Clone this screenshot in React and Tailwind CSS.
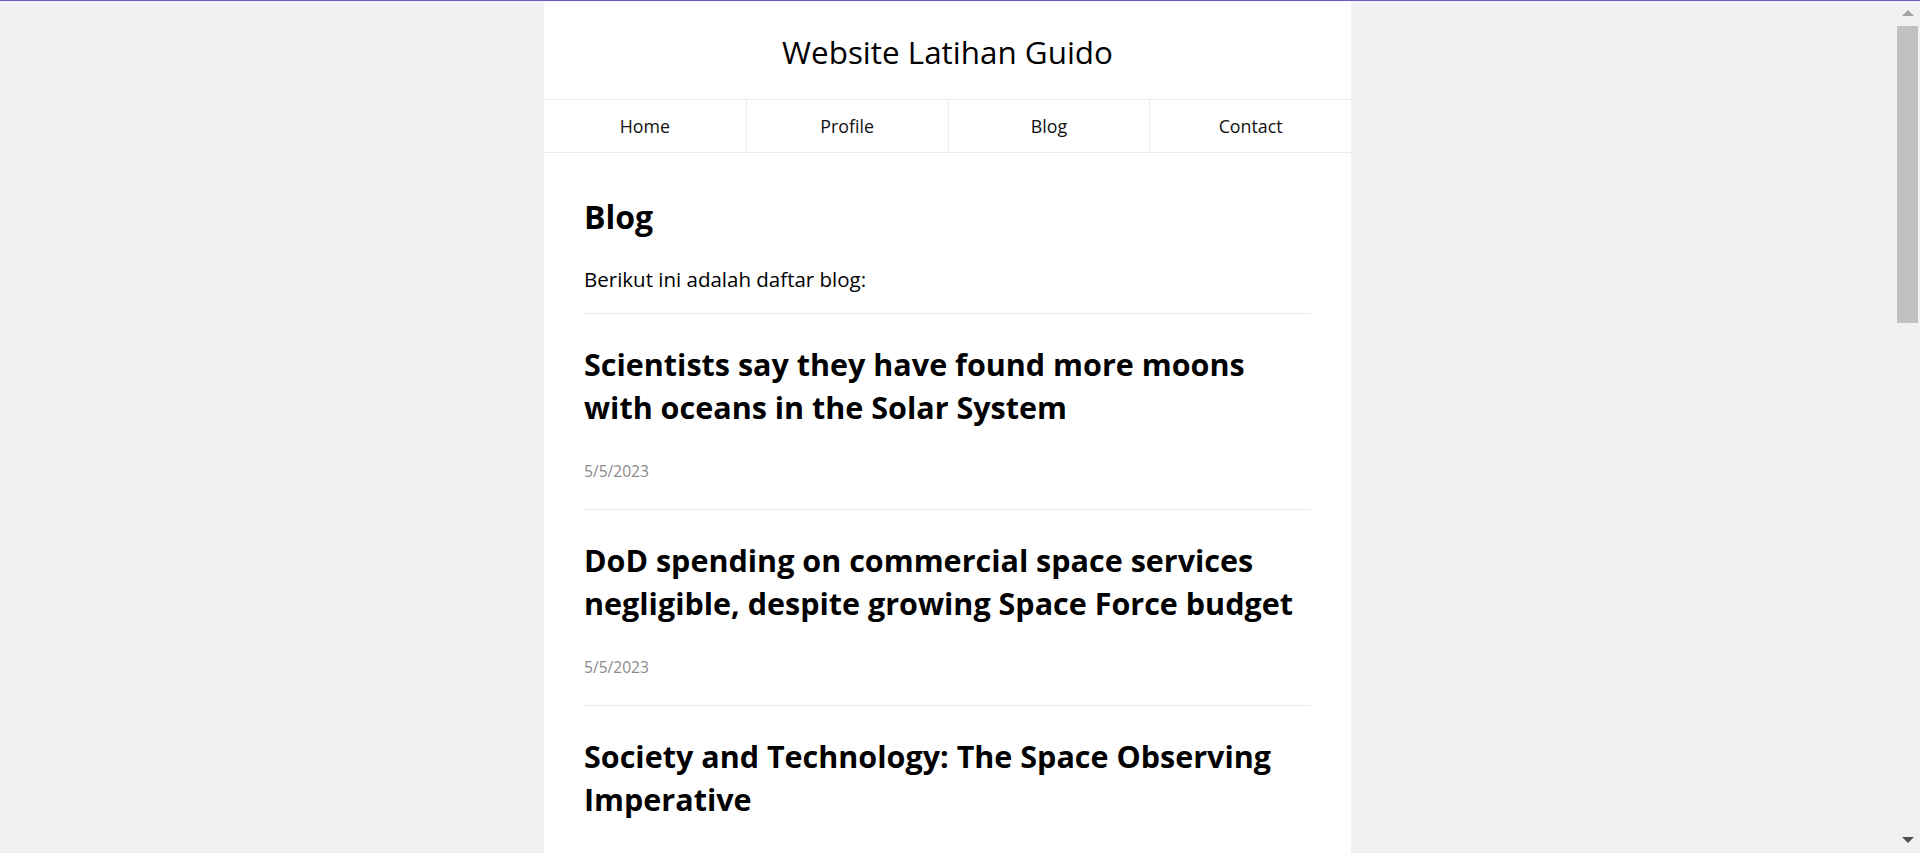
const menu = ['Home', 'Profile', 'Blog', 'Contact'];

const posts = [
  { title: 'Scientists say they have found more moons with oceans in the Solar System', date: '5/5/2023' },
  { title: 'DoD spending on commercial space services negligible, despite growing Space Force budget', date: '5/5/2023' },
  { title: 'Society and Technology: The Space Observing Imperative', date: '5/5/2023' },
];

function FakeScrollbar() {
  // browser scrollbar seen at the right edge of the screenshot
  return (
    <div className="fixed top-0 right-0 h-screen w-[25px] bg-[#f1f1f1] flex flex-col items-center">
      <div className="h-[26px] w-full flex items-center justify-center">
        <div className="w-0 h-0 border-x-[6px] border-x-transparent border-b-[6px] border-b-[#a3a3a3]" />
      </div>
      <div className="w-[21px] h-[297px] bg-[#c1c1c1]" />
      <div className="flex-1" />
      <div className="h-[26px] w-full flex items-center justify-center">
        <div className="w-0 h-0 border-x-[6px] border-x-transparent border-t-[6px] border-t-[#505050]" />
      </div>
    </div>
  );
}

export default function App() {
  return (
    <div className="min-h-screen bg-[#f1f1f1] pr-[25px] font-['Open_Sans','Noto_Sans',sans-serif] text-black">
      <div className="fixed top-0 left-0 right-0 h-px bg-[#6a5acd] z-10" />
      <FakeScrollbar />

      <div className="w-[807px] mx-auto bg-white">
        <header className="pt-[32px] pb-[27px]">
          <h1 className="text-center text-[31.4px] leading-[40px] font-normal">Website Latihan Guido</h1>
        </header>

        <nav className="grid grid-cols-4 border-y border-[#ebebeb]">
          {menu.map((item, i) => (
            <a
              key={item}
              href="#"
              className={`h-[52px] flex items-center justify-center text-[17.8px] text-[#111] ${i > 0 ? 'border-l border-[#ebebeb]' : ''}`}
            >
              {item}
            </a>
          ))}
        </nav>

        <main className="px-[40px] pt-[44px] pb-[40px]">
          <h2 className="text-[32px] leading-[40px] font-bold">Blog</h2>
          <p className="mt-[27px] text-[20.5px] leading-[30px]">Berikut ini adalah daftar blog:</p>

          <div className="mt-[19px]">
            {posts.map((post) => (
              <article key={post.title} className="border-t border-[#ebebeb] pt-[29px] pb-[26px]">
                <h3 className="text-[30.5px] leading-[43px] font-bold">{post.title}</h3>
                <p className="mt-[30px] text-[15.6px] leading-[24px] text-[#8a8a8a]">{post.date}</p>
              </article>
            ))}
          </div>
        </main>
      </div>
    </div>
  );
}
